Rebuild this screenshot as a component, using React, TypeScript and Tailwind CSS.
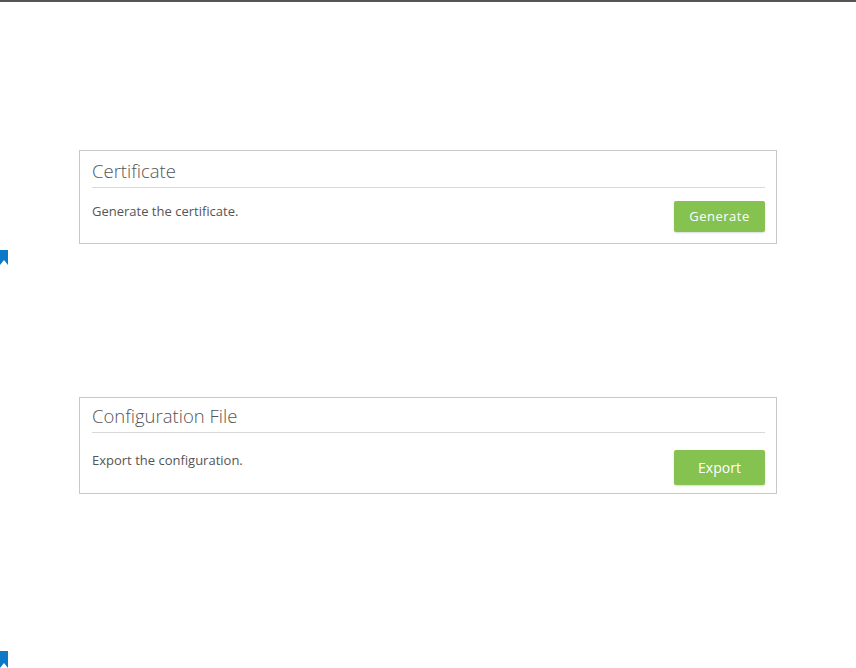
const Marker = ({ h }: { h: number }) => (
  <svg width="8" height={h} viewBox={`0 0 8 ${h}`} className="block">
    <polygon points={`0,0 8,0 8,${h} 4,${h - 5} 0,${h}`} fill="#0b78c8" />
  </svg>
);

const Panel = ({
  title,
  desc,
  button,
  big,
}: {
  title: string;
  desc: string;
  button: string;
  big?: boolean;
}) => (
  <div
    className={`w-[698px] border border-[#c8c8c8] bg-white pl-[12px] pr-[11px] ${
      big ? "h-[97px] pt-[5px]" : "h-[94px] pt-[7px]"
    }`}
  >
    <div className="text-[18.5px] leading-[25px] text-[#555] font-light">{title}</div>
    <div className="mt-[4px] h-px bg-[#d8d8d8]" />
    <div className={`flex justify-between items-start ${big ? "pt-[17px]" : "pt-[13px]"}`}>
      <div className="text-[13px] leading-[16px] text-[#555] mt-[2px]">{desc}</div>
      <button
        className={`w-[91px] rounded-[2px] bg-[#86c24f] text-white shadow-[0_1px_2px_rgba(0,0,0,0.15)] ${
          big ? "h-[35px] text-[14px]" : "h-[31px] text-[13px] tracking-[0.5px]"
        }`}
      >
        {button}
      </button>
    </div>
  </div>
);

export default function App() {
  return (
    <div
      className="w-[856px] h-[668px] overflow-hidden bg-white"
      style={{ fontFamily: '"Open Sans", "Liberation Sans", sans-serif' }}
    >
      <div className="h-[2px] bg-[#555]" />
      <div className="pl-[79px] pt-[148px]">
        <Panel title="Certificate" desc="Generate the certificate." button="Generate" />
      </div>
      <div className="mt-[6px]">
        <Marker h={15} />
      </div>
      <div className="pl-[79px] pt-[132px]">
        <Panel
          title="Configuration File"
          desc="Export the configuration."
          button="Export"
          big
        />
      </div>
      <div className="mt-[157px]">
        <Marker h={17} />
      </div>
    </div>
  );
}
